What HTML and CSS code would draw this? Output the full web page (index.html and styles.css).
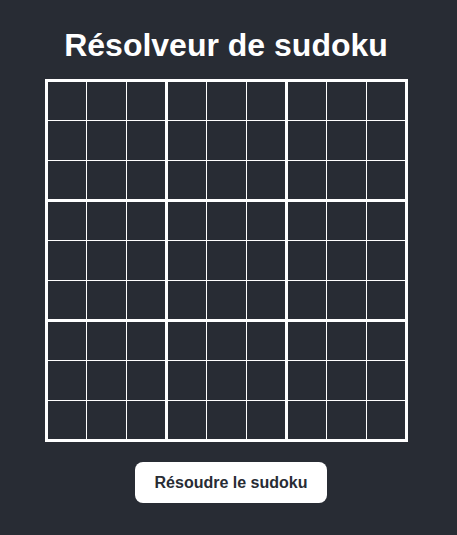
FILE: index.html
```html
<!DOCTYPE html>
<html lang="fr">
<head>
<meta charset="utf-8">
<title>Résolveur de sudoku</title>
<link rel="stylesheet" href="styles.css">
</head>
<body>
<div class="app">
  <h1 class="title">Résolveur de sudoku</h1>
  <div class="board" id="board"></div>
  <button class="solve">Résoudre le sudoku</button>
</div>
<script>
  var board = document.getElementById('board');
  for (var b = 0; b < 9; b++) {
    var box = document.createElement('div');
    box.className = 'box';
    for (var c = 0; c < 9; c++) {
      var cell = document.createElement('div');
      cell.className = 'cell';
      box.appendChild(cell);
    }
    board.appendChild(box);
  }
</script>
</body>
</html>
```

FILE: styles.css
```css
html, body {
  margin: 0;
  padding: 0;
  background: #282c34;
}
body {
  font-family: "Liberation Sans", Arial, sans-serif;
  color: #ffffff;
}
.app {
  width: 452px;
  display: flex;
  flex-direction: column;
  align-items: center;
  padding-top: 27px;
}
.title {
  margin: 0 0 15px 0;
  font-size: 32px;
  font-weight: bold;
  line-height: 37px;
}
.board {
  display: grid;
  grid-template-columns: 117px 117px 117px;
  grid-template-rows: 117px 117px 117px;
  gap: 3px;
  padding: 3px;
  background: #ffffff;
}
.box {
  display: grid;
  grid-template-columns: 38px 39px 38px;
  grid-template-rows: 38px 39px 38px;
  gap: 1px;
  background: #ffffff;
}
.cell {
  background: #282c34;
}
.solve {
  margin: 20px 0 0 10px;
  width: 192px;
  height: 41px;
  border: none;
  border-radius: 8px;
  background: #ffffff;
  color: #282c34;
  font-family: "Liberation Sans", Arial, sans-serif;
  font-size: 16px;
  font-weight: bold;
  padding: 0;
}
```
